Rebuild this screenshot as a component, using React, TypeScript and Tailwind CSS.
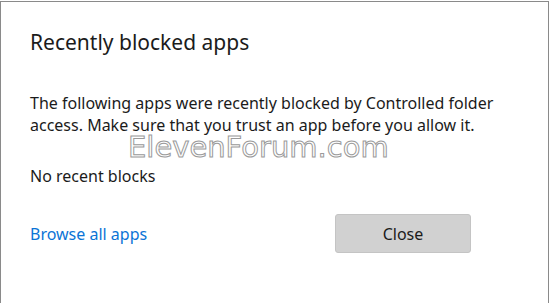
export default function App() {
  return (
    <div className="w-[550px] h-[303px] bg-white pt-px overflow-hidden" style={{ fontFamily: '"Noto Sans", "Open Sans", sans-serif' }}>
      <div className="relative w-[549px] h-[302px] border-t border-l border-r border-[#8a8a8a] flex flex-col pl-[29px] pr-[52px]">
        {/* Title */}
        <h1 className="mt-[26px] text-[21px] leading-[28px] text-[#1b1b1b]">Recently blocked apps</h1>

        {/* Description */}
        <p className="mt-[36px] text-[16px] leading-[22px] text-[#1b1b1b]">
          The following apps were recently blocked by Controlled folder access. Make sure that you trust an app before you allow it.
        </p>

        <p className="mt-[29px] text-[16px] leading-[22px] text-[#1b1b1b]">No recent blocks</p>

        {/* Footer */}
        <div className="mt-[27px] flex items-center justify-between">
          <a className="text-[16px] leading-[22px] text-[#0b74d6] cursor-pointer">Browse all apps</a>
          <button className="w-[136px] h-[39px] rounded-[3px] bg-[#d1d1d1] border border-[#c4c4c4] text-[16px] text-[#1b1b1b] mr-[25px]">
            Close
          </button>
        </div>

        {/* Watermark */}
        <div className="absolute left-[127px] top-[131px] text-[29px] leading-none text-white [-webkit-text-stroke:1px_#9a9a9a] pointer-events-none select-none" style={{ fontFamily: '"DejaVu Sans", sans-serif' }}>
          ElevenForum.com
        </div>
      </div>
    </div>
  )
}
